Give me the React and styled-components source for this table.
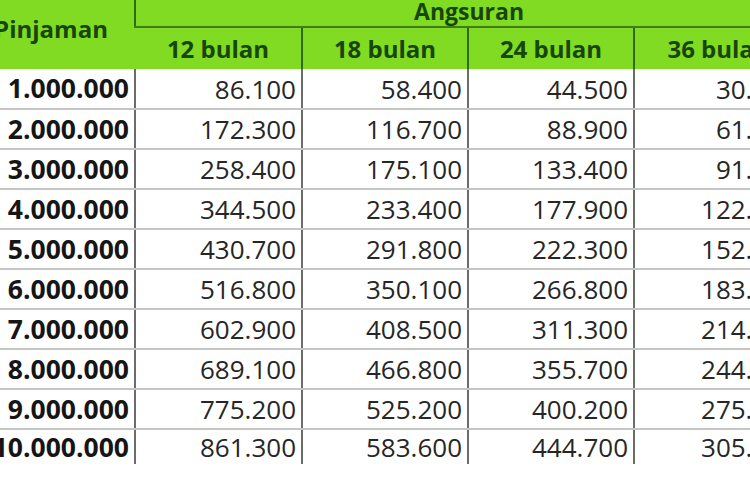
import React from 'react';
import styled, { createGlobalStyle } from 'styled-components';

const GlobalStyle = createGlobalStyle`
  html, body {
    margin: 0;
    padding: 0;
    background: #ffffff;
  }
  body {
    font-family: "Open Sans", "DejaVu Sans", sans-serif;
  }
`;

const Frame = styled.div`
  width: 750px;
  height: 500px;
  overflow: hidden;
  background: #ffffff;
`;

const Table = styled.table`
  margin: -4px 0 0 -32px;
  border-collapse: collapse;
  table-layout: fixed;
  width: 834px;
`;

const Col = styled.col`
  width: ${({ w }) => w}px;
`;

const HeadCell = styled.th`
  background: #80db22;
  color: #17460c;
  font-weight: 700;
  font-size: ${({ small }) => (small ? '23px' : '24px')};
  text-align: center;
  padding: ${({ lift }) => (lift ? '0 0 8px 0' : '0')};
  border-left: 2px solid #2f6a16;
  border-bottom: ${({ bottomLine }) => (bottomLine ? '2px solid #3f7d1c' : 'none')};
  height: ${({ tall }) => tall}px;
  line-height: 1;
  white-space: nowrap;

  &:first-child {
    border-left: none;
  }
`;

const Row = styled.tr`
  height: ${({ last }) => (last ? 35 : 40)}px;

  & > td {
    border-bottom: ${({ last }) => (last ? 'none' : '2px solid #c4c6c4')};
  }
`;

const Cell = styled.td`
  font-size: ${({ bold }) => (bold ? '26.5px' : '26px')};
  font-weight: ${({ bold }) => (bold ? 700 : 400)};
  color: ${({ bold }) => (bold ? '#151515' : '#262626')};
  text-align: right;
  padding: 0 5px 0 0;
  border-left: 2px solid #6b6d6b;
  line-height: 1;
  white-space: nowrap;

  &:first-child {
    border-left: none;
  }
`;

const rows = [
  ['1.000.000', '86.100', '58.400', '44.500', '30.700'],
  ['2.000.000', '172.300', '116.700', '88.900', '61.300'],
  ['3.000.000', '258.400', '175.100', '133.400', '91.900'],
  ['4.000.000', '344.500', '233.400', '177.900', '122.600'],
  ['5.000.000', '430.700', '291.800', '222.300', '152.900'],
  ['6.000.000', '516.800', '350.100', '266.800', '183.600'],
  ['7.000.000', '602.900', '408.500', '311.300', '214.300'],
  ['8.000.000', '689.100', '466.800', '355.700', '244.900'],
  ['9.000.000', '775.200', '525.200', '400.200', '275.600'],
  ['10.000.000', '861.300', '583.600', '444.700', '305.900'],
];

const terms = ['12 bulan', '18 bulan', '24 bulan', '36 bulan'];
const widths = [167, 167, 166, 166, 168];

const App = () => (
  <Frame>
    <GlobalStyle />
    <Table>
      <colgroup>
        {widths.map((w, i) => (
          <Col key={i} w={w} />
        ))}
      </colgroup>
      <thead>
        <tr>
          <HeadCell rowSpan={2} tall={30} lift>
            Pinjaman
          </HeadCell>
          <HeadCell colSpan={4} tall={30} small bottomLine>
            Angsuran
          </HeadCell>
        </tr>
        <tr>
          {terms.map((t) => (
            <HeadCell key={t} tall={41}>
              {t}
            </HeadCell>
          ))}
        </tr>
      </thead>
      <tbody>
        {rows.map((r, i) => (
          <Row key={r[0]} last={i === rows.length - 1}>
            {r.map((v, j) => (
              <Cell key={j} bold={j === 0}>
                {v}
              </Cell>
            ))}
          </Row>
        ))}
      </tbody>
    </Table>
  </Frame>
);

export default App;
